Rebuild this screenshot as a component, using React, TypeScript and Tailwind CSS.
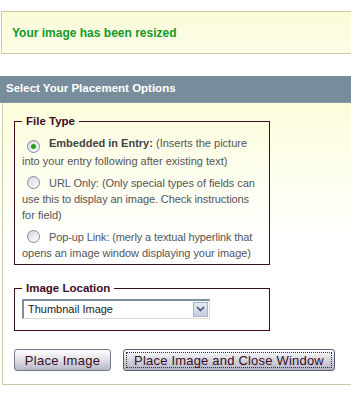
import React from "react";

const Radio = ({ checked }: { checked?: boolean }) => (
  <span className="inline-flex items-center justify-center w-[13px] h-[13px] rounded-full border border-[#7f8a9c] bg-gradient-to-br from-[#d4d6de] to-white align-[-2px] ml-[5px] mr-[9px]">
    {checked && <span className="w-[5px] h-[5px] rounded-full bg-[#21a121]" />}
  </span>
);

export default function App() {
  return (
    <div className="w-[351px] h-[394px] bg-white overflow-hidden font-['Liberation_Sans',Arial,sans-serif] text-[11px]">
      {/* notice */}
      <div className="mt-[11px] ml-[1px] w-[360px] h-[43px] border border-[#cdc9a5] bg-gradient-to-b from-[#fbfbd8] to-[#fdfde9] pl-[10px] pt-[12px]">
        <span className="text-[#129a2c] font-bold text-[12px]">
          Your image has been resized
        </span>
      </div>

      {/* header */}
      <div className="mt-[22px] h-[27px] bg-[#788d9b] border-b border-[#8a9aa5] pl-[6px] flex items-center">
        <span className="text-white font-bold text-[11.5px]">
          Select Your Placement Options
        </span>
      </div>

      {/* panel */}
      <div className="ml-[2px] w-[360px] h-[282px] border-l border-b border-[#cdc9a5] bg-gradient-to-b from-[#fcfcdc] via-white to-white pt-[10px] pl-[11px]">
        <fieldset className="w-[256px] border border-[#3b0d1e] pl-[7px] pr-[4px] pb-[3px] pt-[5px] m-0">
          <legend className="px-[4px] text-[#3b0d1e] font-bold text-[11.5px]">
            File Type
          </legend>
          <div className="text-[#555] leading-[16px] whitespace-nowrap">
            <p>
              <Radio checked />
              <b className="text-[#444]">Embedded in Entry:</b> (Inserts the picture
              <br />
              into your entry following after existing text)
            </p>
            <p className="mt-[6px]">
              <Radio />
              <span className="tracking-[-0.05px]">URL Only: (Only special types of fields can</span>
              <br />
              <span className="tracking-[-0.1px]">use this to display an image. Check instructions</span>
              <br />
              for field)
            </p>
            <p className="mt-[6px]">
              <Radio />
              <span className="tracking-[-0.12px]">Pop-up Link: (merly a textual hyperlink that</span>
              <br />
              <span className="tracking-[-0.05px]">opens an image window displaying your image)</span>
            </p>
          </div>
        </fieldset>

        <fieldset className="mt-[15px] w-[256px] h-[51px] border border-[#3b0d1e] pl-[7px] pt-[1px] m-0">
          <legend className="px-[4px] text-[#3b0d1e] font-bold text-[11.5px]">
            Image Location
          </legend>
          <div className="w-[188px] h-[20px] border-t-2 border-l-2 border-[#7f8e9b] border-b border-r border-b-[#d9d9d9] border-r-[#d9d9d9] bg-white flex items-center justify-between pl-[4px] pr-[1px]">
            <span className="text-[#222] text-[11px]">Thumbnail Image</span>
            <span className="w-[15px] h-[15px] border border-[#a9b4c8] bg-gradient-to-b from-[#e6e9f2] to-[#c6cde0] flex items-center justify-center">
              <svg width="9" height="6" viewBox="0 0 9 6">
                <path d="M1 1 L4.5 4.5 L8 1" fill="none" stroke="#4a5478" strokeWidth="1.6" />
              </svg>
            </span>
          </div>
        </fieldset>

        <div className="mt-[18px] flex gap-[12px]">
          <button className="w-[97px] h-[22px] rounded-[3px] border border-[#717a8c] bg-gradient-to-b from-white via-[#dfdfe6] to-[#b6b8c8] text-[#3b0d1e] text-[13px] tracking-[0.3px] leading-none">
            Place Image
          </button>
          <button className="w-[212px] h-[22px] rounded-[3px] border border-[#555e72] bg-gradient-to-b from-white via-[#d4d5df] to-[#b3b5c6] text-[#3b0d1e] text-[13px] tracking-[0.2px] leading-none p-[2px]">
            <span className="block h-full border border-dotted border-[#333] flex items-center justify-center">
              Place Image and Close Window
            </span>
          </button>
        </div>
      </div>
    </div>
  );
}
